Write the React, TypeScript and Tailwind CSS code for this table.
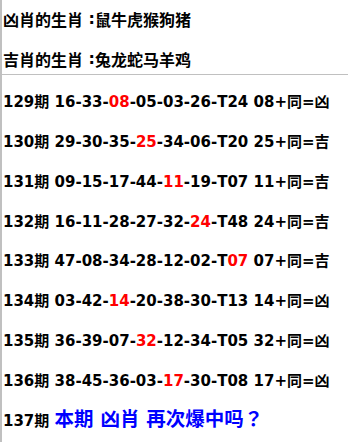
import React from "react";

const rows: { n: string; parts: [string, string, string]; tail: string; end: string }[] = [
  { n: "129", parts: ["16-33-", "08", "-05-03-26-T24"], tail: " 08+", end: "凶" },
  { n: "130", parts: ["29-30-35-", "25", "-34-06-T20"], tail: " 25+", end: "吉" },
  { n: "131", parts: ["09-15-17-44-", "11", "-19-T07"], tail: " 11+", end: "吉" },
  { n: "132", parts: ["16-11-28-27-32-", "24", "-T48"], tail: " 24+", end: "吉" },
  { n: "133", parts: ["47-08-34-28-12-02-T", "07", ""], tail: " 07+", end: "吉" },
  { n: "134", parts: ["03-42-", "14", "-20-38-30-T13"], tail: " 14+", end: "凶" },
  { n: "135", parts: ["36-39-07-", "32", "-12-34-T05"], tail: " 32+", end: "凶" },
  { n: "136", parts: ["38-45-36-03-", "17", "-30-T08"], tail: " 17+", end: "凶" },
];

function Cjk({ children }: { children: React.ReactNode }) {
  return <span className="font-['Noto_Sans_CJK_SC',sans-serif]">{children}</span>;
}

export default function App() {
  return (
    <div className="w-[348px] h-[442px] bg-white border-l-2 border-[#c0c0c0] overflow-hidden text-black font-bold text-[15px] leading-[20px] font-['DejaVu_Sans','Noto_Sans_CJK_SC',sans-serif]">
      <div className="h-[38px] pl-[1px] flex items-center whitespace-pre text-[16px]">
        <Cjk>凶肖的生肖</Cjk>
        <span> :</span>
        <Cjk>鼠牛虎猴狗猪</Cjk>
      </div>
      <div className="h-[36px] pt-[6px] pl-[1px] flex items-center whitespace-pre text-[16px]">
        <Cjk>吉肖的生肖</Cjk>
        <span> :</span>
        <Cjk>兔龙蛇马羊鸡</Cjk>
      </div>
      <div className="border-t border-[#c0c0c0]" />
      <div className="pt-[7px] flex flex-col">
        {rows.map((r) => (
          <div key={r.n} className="h-[39.75px] pl-[1px] flex items-center whitespace-pre">
            <span>
              {r.n}
              <Cjk>期</Cjk> {r.parts[0]}
              <span className="text-[#ff0000]">{r.parts[1]}</span>
              {r.parts[2]}
              {r.tail}
              <Cjk>同</Cjk>=<Cjk>{r.end}</Cjk>
            </span>
          </div>
        ))}
        <div className="h-[39.75px] pl-[1px] flex items-center whitespace-pre">
          <span>
            137<Cjk>期</Cjk>{" "}
            <span className="text-[#0000ff] text-[19.5px]">
              <Cjk>本期</Cjk> <Cjk>凶肖</Cjk> <Cjk>再次爆中吗</Cjk>
              <span className="font-['Noto_Sans_CJK_JP',sans-serif]">？</span>
            </span>
          </span>
        </div>
      </div>
    </div>
  );
}
